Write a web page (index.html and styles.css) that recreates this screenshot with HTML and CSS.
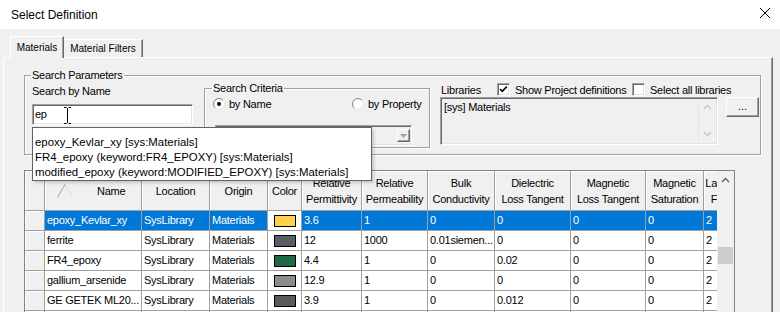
FILE: index.html
```html
<!DOCTYPE html>
<html>
<head>
<meta charset="utf-8">
<title>Select Definition</title>
<link rel="stylesheet" href="styles.css">
</head>
<body>
<div class="window">
  <div class="titlebar">
    <span class="title">Select Definition</span>
    <svg class="close" width="12" height="12" viewBox="0 0 12 12"><path d="M1 1L11 11M11 1L1 11" stroke="#000" stroke-width="1"/></svg>
  </div>
  <div class="tabs">
    <div class="tab active">Materials</div>
    <div class="tab">Material Filters</div>
  </div>
  <div class="panel">
    <fieldset class="group search-params">
      <legend>Search Parameters</legend>
      <div class="name-col">
        <div class="label">Search by Name</div>
        <div class="input-wrap">
          <div class="textbox">ep<svg class="ibeam" width="7" height="17" viewBox="0 0 7 17"><path d="M0 0.5H2.5M4.5 0.5H7M3.5 1V16M0 16.5H2.5M4.5 16.5H7" stroke="#000" stroke-width="1" fill="none"/></svg></div>
          <div class="popup">
            <div class="popup-item">epoxy_Kevlar_xy [sys:Materials]</div>
            <div class="popup-item">FR4_epoxy (keyword:FR4_EPOXY) [sys:Materials]</div>
            <div class="popup-item">modified_epoxy (keyword:MODIFIED_EPOXY) [sys:Materials]</div>
          </div>
        </div>
      </div>
      <fieldset class="group criteria">
        <legend>Search Criteria</legend>
        <div class="radios">
          <div class="radio first">
            <svg width="12" height="12" viewBox="0 0 12 12"><circle cx="6" cy="6" r="5.5" fill="#fff" stroke="#e3e3e3"/><path d="M2.11 9.89A5.5 5.5 0 0 1 9.89 2.11" stroke="#888" fill="none"/><circle cx="6" cy="6" r="2" fill="#000"/></svg>
            <span>by Name</span>
          </div>
          <div class="radio">
            <svg width="12" height="12" viewBox="0 0 12 12"><circle cx="6" cy="6" r="5.5" fill="#fff" stroke="#e3e3e3"/><path d="M2.11 9.89A5.5 5.5 0 0 1 9.89 2.11" stroke="#888" fill="none"/></svg>
            <span>by Property</span>
          </div>
        </div>
        <div class="combo">
          <div class="combo-btn"><svg width="7" height="4" viewBox="0 0 7 4"><path d="M0 0H7L3.5 4Z" fill="#a0a0a0"/></svg></div>
        </div>
      </fieldset>
      <div class="libraries">
        <div class="lib-head">
          <span class="lib-label">Libraries</span>
          <span class="check"><svg width="11" height="11" viewBox="0 0 11 11"><path d="M2 5L4.2 7.3L8.8 2.6" stroke="#000" stroke-width="1.7" fill="none"/></svg></span>
          <span class="check-text wide">Show Project definitions</span>
          <span class="check"></span>
          <span class="check-text">Select all libraries</span>
        </div>
        <div class="lib-body">
          <div class="listbox">
            <div class="list-text">[sys] Materials</div>
            <div class="list-scroll">
              <svg width="9" height="6" viewBox="0 0 9 6"><path d="M1 5L4.5 1.5L8 5" stroke="#c4c4c4" stroke-width="1.3" fill="none"/></svg>
              <svg width="9" height="6" viewBox="0 0 9 6"><path d="M1 1L4.5 4.5L8 1" stroke="#c4c4c4" stroke-width="1.3" fill="none"/></svg>
            </div>
          </div>
          <div class="btn">...</div>
        </div>
      </div>
    </fieldset>

    <div class="grid">
      <div class="grid-view">
        <div class="gv">
          <div class="c h rh"></div>
          <div class="c h name-h"><svg width="16" height="14" viewBox="0 0 16 14"><path d="M0.5 13.5L8 0.5" stroke="#a0a0a0" fill="none"/><path d="M8 0.5L15.5 13.5" stroke="#dcdcdc" fill="none"/></svg><span class="name-t">Name</span></div>
          <div class="c h">Location</div>
          <div class="c h">Origin</div>
          <div class="c h">Color</div>
          <div class="c h">Relative<br>Permittivity</div>
          <div class="c h">Relative<br>Permeability</div>
          <div class="c h">Bulk<br>Conductivity</div>
          <div class="c h">Dielectric<br>Loss Tangent</div>
          <div class="c h">Magnetic<br>Loss Tangent</div>
          <div class="c h">Magnetic<br>Saturation</div>
          <div class="c h">Lande G<br>Factor</div>

          <div class="row sel">
            <div class="c rh"></div>
            <div class="c">epoxy_Kevlar_xy</div>
            <div class="c">SysLibrary</div>
            <div class="c">Materials</div>
            <div class="c color"><span class="swatch" style="background:#ffd04a"></span></div>
            <div class="c">3.6</div>
            <div class="c">1</div>
            <div class="c">0</div>
            <div class="c">0</div>
            <div class="c">0</div>
            <div class="c">0</div>
            <div class="c">2</div>
          </div>
          <div class="row">
            <div class="c rh"></div>
            <div class="c">ferrite</div>
            <div class="c">SysLibrary</div>
            <div class="c">Materials</div>
            <div class="c color"><span class="swatch" style="background:#585c68"></span></div>
            <div class="c">12</div>
            <div class="c">1000</div>
            <div class="c">0.01siemen...</div>
            <div class="c">0</div>
            <div class="c">0</div>
            <div class="c">0</div>
            <div class="c">2</div>
          </div>
          <div class="row">
            <div class="c rh"></div>
            <div class="c">FR4_epoxy</div>
            <div class="c">SysLibrary</div>
            <div class="c">Materials</div>
            <div class="c color"><span class="swatch" style="background:#1e6a46"></span></div>
            <div class="c">4.4</div>
            <div class="c">1</div>
            <div class="c">0</div>
            <div class="c">0.02</div>
            <div class="c">0</div>
            <div class="c">0</div>
            <div class="c">2</div>
          </div>
          <div class="row">
            <div class="c rh"></div>
            <div class="c">gallium_arsenide</div>
            <div class="c">SysLibrary</div>
            <div class="c">Materials</div>
            <div class="c color"><span class="swatch" style="background:#8c8c8c"></span></div>
            <div class="c">12.9</div>
            <div class="c">1</div>
            <div class="c">0</div>
            <div class="c">0</div>
            <div class="c">0</div>
            <div class="c">0</div>
            <div class="c">2</div>
          </div>
          <div class="row">
            <div class="c rh"></div>
            <div class="c">GE GETEK ML20...</div>
            <div class="c">SysLibrary</div>
            <div class="c">Materials</div>
            <div class="c color"><span class="swatch" style="background:#5a5a5a"></span></div>
            <div class="c">3.9</div>
            <div class="c">1</div>
            <div class="c">0</div>
            <div class="c">0.012</div>
            <div class="c">0</div>
            <div class="c">0</div>
            <div class="c">2</div>
          </div>
          <div class="row">
            <div class="c rh"></div>
            <div class="c"></div>
            <div class="c"></div>
            <div class="c"></div>
            <div class="c"></div>
            <div class="c"></div>
            <div class="c"></div>
            <div class="c"></div>
            <div class="c"></div>
            <div class="c"></div>
            <div class="c"></div>
            <div class="c"></div>
          </div>
        </div>
      </div>
      <div class="vscroll">
        <div class="sb-up"><svg width="9" height="6" viewBox="0 0 9 6"><path d="M1 5L4.5 1.5L8 5" stroke="#606060" stroke-width="1.4" fill="none"/></svg></div>
        <div class="sb-thumb"></div>
      </div>
    </div>
  </div>
</div>
</body>
</html>
```
FILE: styles.css
```css
* { box-sizing: border-box; }
html, body { margin: 0; padding: 0; }
body {
  width: 780px;
  height: 312px;
  overflow: hidden;
  background: #f0f0f0;
  font-family: "Liberation Sans", Arial, sans-serif;
  font-size: 11px;
  letter-spacing: -0.25px;
  color: #000;
}
.window {
  width: 780px;
  height: 312px;
  overflow: hidden;
  background: #f0f0f0;
}
.titlebar {
  height: 29px;
  background: #fff;
  display: flex;
  align-items: center;
  padding: 0 9px 0 11px;
}
.title { font-size: 12px; letter-spacing: 0; }
.close { margin-left: auto; align-self: flex-start; margin-top: 7px; }

.tabs {
  height: 28px;
  display: flex;
  align-items: flex-end;
  padding-left: 10px;
}
.tab {
  height: 18px;
  width: 79px;
  font-size: 10px;
  letter-spacing: 0;
  display: flex;
  align-items: center;
  justify-content: center;
  border-top: 1px solid #fff;
  border-right: 1px solid #696969;
  box-shadow: inset -1px 0 0 #a0a0a0;
}
.tab.active {
  width: 54px;
  height: 22px;
  margin-bottom: -1px;
  padding-bottom: 1px;
  border-left: 1px solid #fff;
  background: #f0f0f0;
  position: relative;
  z-index: 1;
}

.panel {
  margin-left: 3px;
  width: 770px;
  height: 300px;
  border-top: 1px solid #fff;
  border-left: 1px solid #fff;
  border-right: 1px solid #696969;
  box-shadow: inset -1px 0 0 #a0a0a0;
  padding-left: 20px;
}

.group {
  margin: 0;
  min-inline-size: 0;
  border: 1px solid #a0a0a0;
  box-shadow: inset 1px 1px 0 #fff, 1px 1px 0 #fff;
}
.group legend {
  padding: 0 1px;
  margin-left: -1px;
  line-height: 13px;
}
.search-params {
  margin-top: 11px;
  width: 737px;
  padding: 0 1px 6px 7px;
  display: flex;
  align-items: flex-start;
}

.name-col { width: 161px; }
.label { margin-top: 2px; line-height: 14px; }
.input-wrap { position: relative; margin-top: 6px; }
.textbox {
  height: 21px;
  background: #fff;
  border: 1px solid;
  border-color: #a0a0a0 #fff #fff #a0a0a0;
  box-shadow: inset 1px 1px 0 #696969, inset -1px -1px 0 #e3e3e3;
  padding-left: 2px;
  line-height: 19px;
  position: relative;
}
.ibeam { position: absolute; left: 31px; top: 2px; }
.popup {
  position: absolute;
  left: 0;
  top: 23px;
  width: 340px;
  background: #fff;
  border: 1px solid #646464;
  box-shadow: 2px 2px 3px rgba(0,0,0,0.18);
  padding: 7px 0 0 2px;
  font-size: 11.4px;
  letter-spacing: 0;
  z-index: 10;
}
.popup-item { line-height: 15px; white-space: nowrap; }

.criteria {
  margin-left: 11px;
  width: 226px;
  padding: 0 6px 1px 8px;
}
.radios { display: flex; height: 18px; align-items: center; }
.radio { display: flex; align-items: center; }
.radio svg { margin-right: 4px; flex: none; }
.radio.first { width: 139px; }
.combo {
  margin-top: 12px;
  margin-left: 2px;
  width: 197px;
  height: 21px;
  border: 1px solid;
  border-color: #a0a0a0 #fff #fff #a0a0a0;
  box-shadow: inset 1px 1px 0 #696969, inset -1px -1px 0 #e3e3e3;
  display: flex;
  align-items: center;
  justify-content: flex-end;
  padding-right: 1px;
}
.combo-btn {
  width: 13px;
  height: 13px;
  border: 1px solid;
  border-color: #fff #696969 #696969 #fff;
  box-shadow: inset -1px -1px 0 #a0a0a0;
  display: flex;
  align-items: center;
  justify-content: center;
}

.libraries { margin-left: 10px; flex: 1; }
.lib-head { height: 15px; display: flex; align-items: center; }
.lib-label { width: 57px; padding-left: 1px; }
.check {
  width: 13px;
  height: 13px;
  flex: none;
  background: #fff;
  border: 1px solid;
  border-color: #a0a0a0 #fff #fff #a0a0a0;
  box-shadow: inset 1px 1px 0 #696969, inset -1px -1px 0 #e3e3e3;
  display: flex;
  align-items: center;
  justify-content: center;
}
.check-text { margin-left: 5px; }
.check-text.wide { width: 117px; }
.lib-body { display: flex; align-items: flex-start; }
.listbox {
  width: 278px;
  height: 48px;
  border: 1px solid;
  border-color: #a0a0a0 #fff #fff #a0a0a0;
  box-shadow: inset 1px 1px 0 #696969, inset -1px -1px 0 #e3e3e3;
  display: flex;
  padding: 2px 2px 2px 3px;
}
.list-text { flex: 1; line-height: 13px; margin-top: 1px; }
.list-scroll {
  width: 17px;
  border-left: 1px solid #e6e6e6;
  display: flex;
  flex-direction: column;
  align-items: center;
  justify-content: space-between;
  padding: 4px 0 5px;
}
.btn {
  margin-left: 8px;
  width: 33px;
  height: 20px;
  border: 1px solid;
  border-color: #fff #696969 #696969 #fff;
  box-shadow: inset -1px -1px 0 #a0a0a0;
  display: flex;
  align-items: center;
  justify-content: center;
  letter-spacing: 0;
  line-height: 12px;
  padding-bottom: 2px;
}

.grid {
  margin-top: 15px;
  width: 711px;
  height: 150px;
  border: 1px solid #828282;
  display: flex;
}
.grid-view { width: 692px; overflow: hidden; background: #f0f0f0; }
.gv {
  display: grid;
  grid-template-columns: 20px 97px 68px 58px 34px 60px 66px 67px 76px 75px 58px 44px;
  grid-template-rows: 40px;
  grid-auto-rows: 20px;
  width: 723px;
}
.row { display: contents; }
.c {
  border-right: 1px solid #a0a0a0;
  border-bottom: 1px solid #a0a0a0;
  padding-left: 2px;
  line-height: 19px;
  white-space: nowrap;
  overflow: hidden;
  background: #fff;
}
.h {
  background: #f0f0f0;
  box-shadow: inset 1px 1px 0 #fff;
  display: flex;
  align-items: center;
  justify-content: center;
  text-align: center;
  line-height: 16px;
  padding: 0;
}
.name-h { justify-content: flex-start; padding-left: 12px; }
.name-t { margin-left: 24px; }
.rh { background: #f0f0f0; box-shadow: inset 1px 1px 0 #fff; }
.sel .c { background: #0078d7; color: #fff; }
.sel .c.rh { background: #f0f0f0; }
.sel .c.color { background: #fff; }
.color { display: flex; align-items: center; padding-left: 6px; }
.swatch {
  width: 22px;
  height: 12px;
  border: 1px solid #000;
}

.vscroll {
  width: 17px;
  background: #f0f0f0;
  display: flex;
  flex-direction: column;
}
.sb-up { height: 17px; display: flex; align-items: center; justify-content: center; }
.sb-thumb { margin: 59px 1px 0 1px; height: 17px; background: #cdcdcd; }
```
